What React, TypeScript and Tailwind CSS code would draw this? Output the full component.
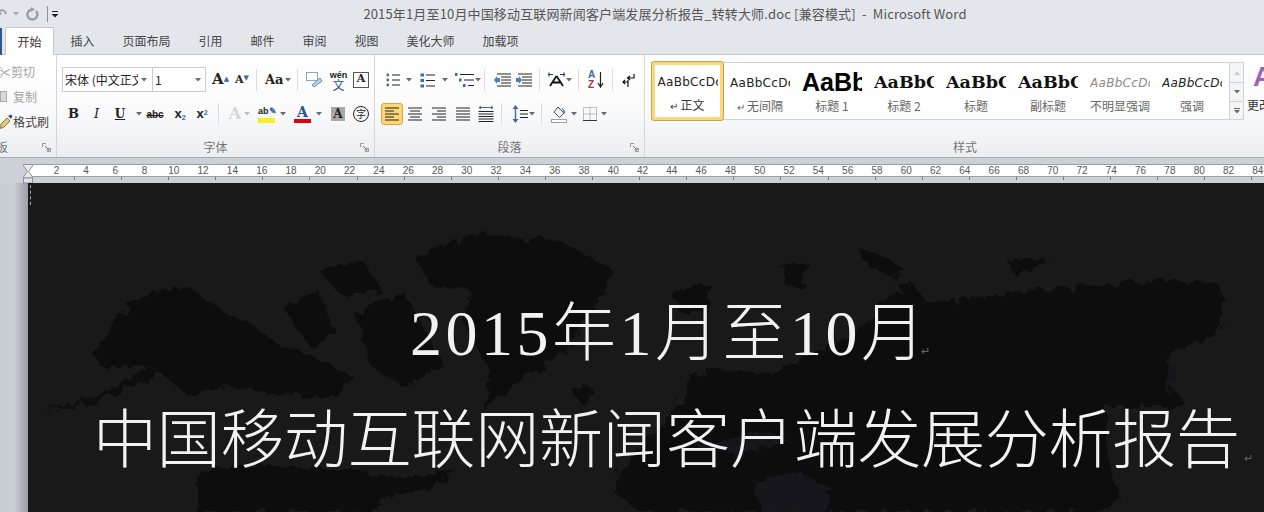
import React from "react";

const tabs = [
  { label: "插入", w: "w-[55px]" },
  { label: "页面布局", w: "w-[73px]" },
  { label: "引用", w: "w-[55px]" },
  { label: "邮件", w: "w-[49px]" },
  { label: "审阅", w: "w-[55px]" },
  { label: "视图", w: "w-[49px]" },
  { label: "美化大师", w: "w-[79px]" },
  { label: "加载项", w: "w-[61px]" },
];

const rulerNumbers = Array.from({ length: 42 }, (_, i) => (i + 1) * 2);
const rulerTicks = Array.from({ length: 26 }, (_, i) => i);

const Caret = ({ className = "" }: { className?: string }) => (
  <svg width="6" height="4" viewBox="0 0 6 4" className={`shrink-0 ${className}`}>
    <path d="M0 0h6L3 3.5z" fill="#6b6b6b" />
  </svg>
);

const Sep = ({ className = "" }: { className?: string }) => (
  <div className={`w-px h-[22px] bg-[#dcdee2] shrink-0 ${className}`} />
);

const Launcher = () => (
  <svg width="9" height="9" viewBox="0 0 9 9" className="shrink-0">
    <path d="M0.5 4V0.5H4M8.5 5v3.5H5" fill="none" stroke="#9a9a9a" />
    <path d="M3 3l4 4M7 4.5V7H4.5" fill="none" stroke="#777" />
  </svg>
);

const Lines = ({ rows, w = 16 }: { rows: [number, number][]; w?: number }) => (
  <svg width={w} height="14" viewBox={`0 0 ${w} 14`} className="shrink-0">
    {rows.map(([x, len], i) => (
      <rect key={i} x={x} y={1 + i * (12 / (rows.length - 1 || 1)) - 0.5} width={len} height="1" fill="#222" />
    ))}
  </svg>
);

const BulletList = () => (
  <svg width="14" height="14" viewBox="0 0 14 14" className="shrink-0">
    {[2, 7, 12].map((y) => (
      <g key={y}>
        <circle cx="1.8" cy={y} r="1.4" fill="#3d6aa5" />
        <rect x="6" y={y - 0.5} width="8" height="1" fill="#222" />
      </g>
    ))}
  </svg>
);

const NumberList = () => (
  <svg width="15" height="15" viewBox="0 0 15 15" className="shrink-0">
    {[2, 7.5, 13].map((y) => (
      <g key={y}>
        <rect x="0.5" y={y - 1.5} width="3.5" height="3" fill="#3d6aa5" />
        <rect x="6" y={y - 0.5} width="9" height="1" fill="#222" />
      </g>
    ))}
  </svg>
);

const MultiList = () => (
  <svg width="19" height="16" viewBox="0 0 19 16" className="shrink-0">
    <rect x="0" y="1" width="2.5" height="3" fill="#3d6aa5" />
    <rect x="5" y="2" width="14" height="1" fill="#222" />
    <rect x="4" y="6.5" width="2.5" height="3" fill="#3d6aa5" />
    <rect x="9" y="7.5" width="10" height="1" fill="#222" />
    <rect x="8" y="12" width="2.5" height="3" fill="#3d6aa5" />
    <rect x="13" y="13" width="6" height="1" fill="#222" />
  </svg>
);

const Indent = ({ flip = false }: { flip?: boolean }) => (
  <svg width="17" height="14" viewBox="0 0 17 14" className="shrink-0">
    {[1, 4, 7, 10, 13].map((y, i) => (
      <rect key={y} x={i === 0 || i === 4 ? 3 : 7} y={y - 0.5} width={i === 0 || i === 4 ? 14 : 10} height="1" fill="#222" />
    ))}
    <path d={flip ? "M1 5h3V3l3 4-3 4V9H1z" : "M6 5H3V3L0 7l3 4V9h3z"} fill="#4a7ebb" />
  </svg>
);

const AsianLayout = () => (
  <svg width="17" height="16" viewBox="0 0 17 16" className="shrink-0">
    <path d="M8.5 4L2 14M8.5 4L15 14M5 10.5h7" stroke="#111" strokeWidth="1.8" fill="none" />
    <path d="M0 2.5h5M12 2.5h5" stroke="#1f3f77" strokeWidth="1.2" />
    <path d="M1 0.5v4M16 0.5v4" stroke="#1f3f77" strokeWidth="1.2" />
  </svg>
);

const Sort = () => (
  <div className="relative w-[17px] h-[20px] shrink-0 font-['Liberation_Sans',sans-serif] font-bold text-[10px] leading-[10px]">
    <div className="text-[#3d6aa5] pl-px">A</div>
    <div className="text-[#9c3c3c] pl-px">Z</div>
    <svg width="7" height="17" viewBox="0 0 7 17" className="absolute right-0 top-[2px]">
      <path d="M3.5 0v15M1 11l2.5 4L6 11" stroke="#222" strokeWidth="1.2" fill="none" />
    </svg>
  </div>
);

const ParaMark = () => (
  <svg width="13" height="15" viewBox="0 0 13 15" className="shrink-0">
    <path d="M12 1v4H6M8 3L5.5 5 8 7" stroke="#111" strokeWidth="1.2" fill="none" />
    <path d="M6 9H1M3 7l-2 2 2 2M6 7v7" stroke="#111" strokeWidth="1.2" fill="none" />
  </svg>
);

const Distributed = () => (
  <svg width="16" height="18" viewBox="0 0 16 18" className="shrink-0">
    <path d="M1 2.5h14M3 1L1 2.5 3 4M13 1l2 1.5L13 4" stroke="#3d6aa5" fill="none" />
    {[6, 8.5, 11, 13.5, 16].map((y) => (
      <rect key={y} x="0.5" y={y} width="15" height="1" fill="#222" />
    ))}
  </svg>
);

const LineSpacing = () => (
  <svg width="16" height="18" viewBox="0 0 16 18" className="shrink-0">
    <path d="M3.5 3v12" stroke="#3d6aa5" strokeWidth="1.4" />
    <path d="M3.5 0L0.5 4h6zM3.5 18l-3-4h6z" fill="#3d6aa5" />
    {[5, 8.5, 12].map((y) => (
      <rect key={y} x="8" y={y} width="8" height="1" fill="#222" />
    ))}
  </svg>
);

const Shade = () => (
  <svg width="16" height="17" viewBox="0 0 16 17" className="shrink-0">
    <path d="M7 1l6 6-4.5 4.5L3 6z" fill="#eef2f6" stroke="#555" />
    <path d="M7 1L9 3.5" stroke="#555" />
    <path d="M11 2l3 4-1 1.5" fill="#3d7ec8" stroke="#3d7ec8" />
    <rect x="0.5" y="13.5" width="15" height="3" fill="#fff" stroke="#a0a0a0" />
  </svg>
);

const Borders = () => (
  <svg width="14" height="14" viewBox="0 0 14 14" className="shrink-0">
    <path d="M0.5 0.5h13v13h-13zM7 0.5v13M0.5 7h13" fill="none" stroke="#888" strokeDasharray="1 1" />
    <path d="M0 13.5h14" stroke="#333" />
  </svg>
);

const Brush = () => (
  <svg width="13" height="15" viewBox="0 0 13 15" className="shrink-0">
    <path d="M1 10l6-6 3 3-6 6-3.5 1.5z" fill="#e6c86e" stroke="#8a7a4a" />
    <path d="M8 2l3-1.5 1.5 1.5L11 5z" fill="#2d4f8a" />
  </svg>
);

const Hourglass = () => (
  <svg width="11" height="20" viewBox="0 0 11 20" className="absolute left-[23px] top-[6px]">
    <path d="M0.5 0.5h9v1.5L5.5 7.5l4 5.5v1h-9v-1l4-5.5-4-5.5z" fill="#e9ebee" stroke="#8d9299" />
    <rect x="0.5" y="14" width="9" height="5" fill="#e1e3e7" stroke="#8d9299" />
  </svg>
);

const styles = [
  { sample: "AaBbCcDc", label: "正文", mark: true, cls: "font-['DejaVu_Sans',sans-serif] text-[12px] tracking-[0.3px] text-[#222]", selected: true },
  { sample: "AaBbCcDc", label: "无间隔", mark: true, cls: "font-['DejaVu_Sans',sans-serif] text-[12px] tracking-[0.3px] text-[#222]", selected: false },
  { sample: "AaBbCc", label: "标题 1", mark: false, cls: "font-['Liberation_Sans',sans-serif] font-bold text-[25px] text-black", selected: false },
  { sample: "AaBbCc", label: "标题 2", mark: false, cls: "font-['DejaVu_Serif',serif] font-bold text-[17.5px] text-[#111]", selected: false },
  { sample: "AaBbCc", label: "标题", mark: false, cls: "font-['DejaVu_Serif',serif] font-bold text-[17.5px] text-[#111]", selected: false },
  { sample: "AaBbCc", label: "副标题", mark: false, cls: "font-['DejaVu_Serif',serif] font-bold text-[17.5px] text-[#111]", selected: false },
  { sample: "AaBbCcDc", label: "不明显强调", mark: false, cls: "font-['DejaVu_Sans',sans-serif] italic text-[12px] tracking-[0.3px] text-[#8a8a8a]", selected: false },
  { sample: "AaBbCcDc", label: "强调", mark: false, cls: "font-['DejaVu_Sans',sans-serif] italic text-[12px] tracking-[0.3px] text-[#222]", selected: false },
];

// faint continents behind the title, the filter roughens the coast lines
const WorldMap = () => (
  <svg viewBox="28 183 1236 329" className="absolute inset-0 w-full h-full">
    <defs>
      <filter id="coast" x="-5%" y="-5%" width="110%" height="110%">
        <feTurbulence type="fractalNoise" baseFrequency="0.09" numOctaves="3" seed="4" />
        <feDisplacementMap in="SourceGraphic" scale="14" />
      </filter>
    </defs>
    <g fill="#0f0f10" filter="url(#coast)">
      <path d="M137 297L185 285L226 313L250 323L282 347L306 353L355 377L343 387L330 400L300 395L226 387L190 397L153 367L101 367L93 353L117 320Z" />
      <path d="M40 413L100 395L150 367L160 372L100 400Z" />
      <path d="M282 307L318 290L335 333L310 347Z" />
      <path d="M318 270L363 260L383 293L339 293Z" />
      <path d="M355 313L403 290L444 367L403 387L371 367Z" />
      <path d="M415 257L476 233L565 243L613 270L600 295L565 353L504 393L484 413L490 370L462 320L470 290L430 285Z" />
      <path d="M573 390L590 385L597 397L580 403Z" />
      <path d="M197 470L260 465L340 470L400 478L456 470L430 490L390 495L370 512L197 512Z" />
      <path d="M955 300L1035 290L1075 287L1156 280L1217 283L1225 300L1217 337L1184 347L1168 353L1172 387L1188 407L1108 407L1104 447L1120 497L1100 512L640 512L612 490L632 457L672 413L690 380L713 367L760 375L800 360L860 330L885 300L910 280L925 300L942 303Z" />
      <path d="M858 247L880 255L906 270L895 280L868 265Z" />
      <path d="M1007 260L1047 258L1030 272L1015 275Z" />
      <path d="M672 290L712 285L705 312L680 312Z" />
      <path d="M780 265L810 262L800 290L785 285Z" />
    </g>
    <g fill="#19191a" filter="url(#coast)">
      <path d="M753 480L800 472L833 490L825 512L760 512Z" />
      <path d="M690 445L760 430L790 440L740 455Z" />
      <path d="M1170 360L1180 385L1165 392Z" />
    </g>
  </svg>
);

export default function App() {
  return (
    <div className="w-[1264px] h-[512px] overflow-hidden flex flex-col bg-[#ccd0d7] font-['Noto_Sans_CJK_SC',sans-serif]">
      {/* title bar */}
      <div className="h-[27px] shrink-0 relative flex items-center justify-center bg-[#e3e7ec] pl-[66px]">
        <span className="text-[13px] tracking-[0.15px] text-[#555] whitespace-pre">2015年1月至10月中国移动互联网新闻客户端发展分析报告_转转大师.doc [兼容模式]  -  Microsoft Word</span>
        <div className="absolute left-0 top-0 h-full flex items-center">
          <span className="text-[14px] text-[#9a9da3] -ml-[5px] w-[18px] font-bold">↶</span>
          <Caret className="opacity-50" />
          <svg width="14" height="14" viewBox="0 0 14 14" className="ml-[6px]">
            <path d="M11 4a5 5 0 1 1-4-1.5" stroke="#9a9da3" strokeWidth="2.4" fill="none" />
            <path d="M6 0v5l4-2.5z" fill="#9a9da3" />
          </svg>
          <div className="w-px h-[16px] bg-[#8f9399] ml-[8px]" />
          <svg width="8" height="8" viewBox="0 0 8 8" className="ml-[3px]">
            <path d="M1 1.5h6" stroke="#222" />
            <path d="M0.5 4h7L4 7.5z" fill="#222" />
          </svg>
        </div>
      </div>

      {/* tabs */}
      <div className="h-[28px] shrink-0 flex items-end bg-[#e3e7ec] border-b border-[#c4c7cc]">
        <div className="w-[2px] h-[27px] bg-[#2b579a] -mb-px" />
        <div className="w-[49px] h-[28px] ml-[3px] -mb-px bg-white border border-b-0 border-[#c4c7cc] rounded-t-[2px] flex items-center justify-center text-[12px] text-[#333]">开始</div>
        <div className="flex h-full ml-[1px]">
          {tabs.map((t) => (
            <div key={t.label} className={`${t.w} flex items-center justify-center text-[12px] text-[#444]`}>{t.label}</div>
          ))}
        </div>
      </div>

      {/* ribbon */}
      <div className="h-[103px] shrink-0 flex bg-gradient-to-b from-white via-[#fbfbfc] to-[#eceef1] border-b border-[#a9acb1]">
        {/* clipboard */}
        <div className="w-[57px] shrink-0 border-r border-[#d4d6da] flex flex-col text-[12px] overflow-hidden">
          <div className="h-[25px] mt-[4px] flex items-center text-[#a3a3a3]">
            <span className="w-[13px] text-[13px] -ml-[2px] pr-[2px]">✂</span><span>剪切</span>
          </div>
          <div className="h-[25px] flex items-center text-[#a3a3a3]">
            <div className="w-[7px] h-[11px] bg-[#d8d8d8] border border-[#aaa] mr-[6px]" /><span>复制</span>
          </div>
          <div className="h-[25px] flex items-center text-[#444]">
            <Brush /><span>格式刷</span>
          </div>
          <div className="mt-auto h-[20px] flex items-center justify-between pr-[5px] text-[#777]">
            <span className="-ml-[4px]">板</span>
            <Launcher />
          </div>
        </div>

        {/* font */}
        <div className="w-[318px] shrink-0 border-r border-[#d4d6da] flex flex-col">
          <div className="h-[25px] mt-[12px] pl-[5px] flex items-center">
            <div className="w-[91px] h-[25px] border border-[#c9ccd1] bg-white flex items-center pl-[2px] pr-[5px] text-[12px] text-[#222] overflow-hidden whitespace-nowrap">
              <span className="w-[73px] overflow-hidden">宋体 (中文正文</span><Caret className="ml-auto" />
            </div>
            <div className="w-[53px] h-[25px] border border-l-0 border-[#c9ccd1] bg-white flex items-center pl-[2px] pr-[4px] text-[12px] text-[#222]">
              <span>1</span><Caret className="ml-auto" />
            </div>
            <span className="ml-[6px] w-[22px] font-['DejaVu_Serif',serif] font-bold text-[15px] leading-none text-[#222]">A<sup className="text-[7px] text-[#3d6aa5]">▲</sup></span>
            <span className="ml-[1px] w-[19px] font-['DejaVu_Serif',serif] font-bold text-[11px] leading-none text-[#222]">A<sup className="text-[7px] text-[#3d6aa5]">▼</sup></span>
            <Sep className="ml-[2px]" />
            <span className="ml-[8px] font-['DejaVu_Serif',serif] font-bold text-[13px] text-[#222] w-[20px] whitespace-nowrap">Aa</span>
            <Caret />
            <Sep className="ml-[6px]" />
            <svg width="17" height="17" viewBox="0 0 17 17" className="ml-[8px]">
              <rect x="0.5" y="1.5" width="11" height="8" fill="#fff" stroke="#8aa4c8" />
              <path d="M6 14l8-7 2 3-8 6z" fill="#bcd3ee" stroke="#6b8ab0" />
            </svg>
            <div className="ml-[7px] w-[17px] h-[18px] flex flex-col items-center leading-[8px]">
              <span className="text-[9px] font-bold text-[#222] font-['Liberation_Sans',sans-serif]">wén</span>
              <span className="text-[12px] text-[#2d4f8a] leading-[11px]">文</span>
            </div>
            <div className="ml-[6px] w-[16px] h-[16px] border border-[#555] flex items-center justify-center font-['DejaVu_Serif',serif] font-bold text-[11px] text-[#222]">A</div>
          </div>
          <div className="h-[20px] mt-[12px] pl-[5px] flex items-center font-['DejaVu_Serif',serif] text-[#222]">
            <span className="w-[23px] text-center font-bold text-[13px]">B</span>
            <span className="w-[23px] text-center italic text-[13px]">I</span>
            <span className="w-[24px] text-center underline font-bold text-[12px]">U</span>
            <Caret className="ml-[4px]" />
            <span className="ml-[2px] w-[22px] text-center line-through font-bold text-[10px] font-['Liberation_Sans',sans-serif]">abc</span>
            <span className="ml-[3px] w-[22px] text-center font-bold text-[13px] font-['Liberation_Sans',sans-serif]">x<sub className="text-[7px] text-[#3d6aa5]">2</sub></span>
            <span className="w-[22px] text-center font-bold text-[13px] font-['Liberation_Sans',sans-serif]">x<sup className="text-[7px] text-[#3d6aa5]">2</sup></span>
            <Sep className="ml-[5px]" />
            <span className="ml-[9px] w-[14px] text-center font-bold text-[16px] text-[#d6d6d6]">A</span>
            <Caret className="ml-[2px] opacity-40" />
            <div className="ml-[8px] w-[17px] h-[17px] flex flex-col items-center">
              <span className="w-full h-[12px] leading-[11px] text-[9px] font-bold font-['Liberation_Sans',sans-serif] text-[#222]">ab<span className="text-[#3d6aa5]">✎</span></span>
              <span className="w-full h-[5px] bg-[#f4f21c]" />
            </div>
            <Caret className="ml-[5px]" />
            <div className="ml-[8px] w-[17px] h-[17px] flex flex-col items-center">
              <span className="h-[12px] leading-[12px] font-bold text-[14px] text-[#2d4f8a]">A</span>
              <span className="w-full h-[4px] bg-[#e0000f] mt-px" />
            </div>
            <Caret className="ml-[5px]" />
            <div className="ml-[9px] w-[14px] h-[14px] bg-[#a9a9a9] flex items-center justify-center font-bold text-[12px] text-[#222]">A</div>
            <div className="ml-[8px] w-[16px] h-[16px] rounded-full border border-[#222] flex items-center justify-center text-[10px] leading-none text-[#222] font-['Noto_Sans_CJK_SC',sans-serif]">字</div>
          </div>
          <div className="mt-auto h-[20px] relative flex items-center justify-center text-[12px] text-[#777]">
            字体
            <div className="absolute right-[5px] top-[6px]"><Launcher /></div>
          </div>
        </div>

        {/* paragraph */}
        <div className="w-[270px] shrink-0 border-r border-[#d4d6da] flex flex-col">
          <div className="h-[24px] mt-[13px] pl-[11px] flex items-center">
            <BulletList /><Caret className="ml-[6px]" />
            <div className="ml-[8px]"><NumberList /></div><Caret className="ml-[7px]" />
            <div className="ml-[7px]"><MultiList /></div><Caret className="ml-[1px]" />
            <Sep className="ml-[3px]" />
            <div className="ml-[9px]"><Indent /></div>
            <div className="ml-[4px]"><Indent flip /></div>
            <Sep className="ml-[7px]" />
            <div className="ml-[8px]"><AsianLayout /></div><Caret className="ml-[1px]" />
            <Sep className="ml-[6px]" />
            <div className="ml-[8px]"><Sort /></div>
            <Sep className="ml-[8px]" />
            <div className="ml-[9px]"><ParaMark /></div>
          </div>
          <div className="h-[22px] mt-[11px] pl-[6px] flex items-center">
            <div className="w-[22px] h-[22px] rounded-[3px] bg-[#fdd776] border border-[#d9a441] flex items-center justify-center">
              <Lines w={14} rows={[[0, 14], [0, 9], [0, 14], [0, 9], [0, 14]]} />
            </div>
            <div className="ml-[5px]"><Lines w={14} rows={[[0, 14], [2, 10], [0, 14], [2, 10], [0, 14]]} /></div>
            <div className="ml-[10px]"><Lines w={14} rows={[[0, 14], [5, 9], [0, 14], [5, 9], [0, 14]]} /></div>
            <div className="ml-[10px]"><Lines w={14} rows={[[0, 14], [0, 14], [0, 14], [0, 14], [0, 14]]} /></div>
            <div className="ml-[8px]"><Distributed /></div>
            <Sep className="ml-[7px]" />
            <div className="ml-[10px]"><LineSpacing /></div><Caret className="ml-[1px]" />
            <Sep className="ml-[6px]" />
            <div className="ml-[9px]"><Shade /></div><Caret className="ml-[4px]" />
            <div className="ml-[6px]"><Borders /></div><Caret className="ml-[4px]" />
          </div>
          <div className="mt-auto h-[20px] relative flex items-center justify-center text-[12px] text-[#777]">
            段落
            <div className="absolute right-[5px] top-[6px]"><Launcher /></div>
          </div>
        </div>

        {/* styles */}
        <div className="flex-1 min-w-0 flex flex-col overflow-hidden">
          <div className="h-[58px] mt-[7px] pl-[6px] flex items-stretch">
            <div className="w-[579px] shrink-0 flex bg-white border border-[#cfd2d6]">
              {styles.map((s, i) => (
                <div
                  key={i}
                  className={`shrink-0 flex flex-col items-center overflow-hidden ${s.selected ? "w-[71px] mr-px border-[3px] border-[#fbd878] outline outline-1 outline-[#c9a44f] rounded-[2px] -my-px pt-[2px]" : "w-[72px] pt-[5px]"}`}
                >
                  <div className={`w-[60px] h-[29px] overflow-hidden whitespace-nowrap flex items-center justify-start ${s.cls}`}>{s.sample}</div>
                  <div className={`text-[12px] leading-[17px] whitespace-nowrap ${s.selected ? "text-[#333]" : "text-[#666]"}`}>
                    {s.mark && <span className="text-[10px] mr-[2px]">↵</span>}{s.label}
                  </div>
                </div>
              ))}
            </div>
            <div className="w-[14px] shrink-0 flex flex-col border border-l-0 border-[#cfd2d6] bg-[#f4f5f7]">
              <div className="h-[20px] flex items-center justify-center border-b border-[#cfd2d6]"><Caret className="rotate-180 opacity-30" /></div>
              <div className="h-[19px] flex items-center justify-center border-b border-[#cfd2d6]"><Caret /></div>
              <div className="flex-1 flex flex-col items-center justify-center"><div className="w-[6px] h-px bg-[#666] mb-px" /><Caret /></div>
            </div>
            <div className="ml-[3px] flex flex-col text-[12px] text-[#333] whitespace-nowrap">
              <span className="h-[30px] ml-[6px] font-['Liberation_Sans',sans-serif] font-bold text-[28px] leading-[30px] text-[#a35fb8]">A</span>
              <span className="mt-[4px] leading-[17px]">更改</span>
            </div>
          </div>
          <div className="mt-auto h-[20px] w-[640px] flex items-center justify-center text-[12px] text-[#777]">样式</div>
        </div>
      </div>

      {/* ruler */}
      <div className="h-[25px] shrink-0 relative pt-[6px] bg-[#ccd0d7]">
        <div className="ml-[28px] h-[13px] bg-white border-y border-[#9a9da3] flex pl-[14px] items-center overflow-hidden">
          {rulerNumbers.map((n) => (
            <span key={n} className="w-[29.3px] shrink-0 text-center text-[10px] leading-none text-[#555] font-['Liberation_Sans',sans-serif]">{n}</span>
          ))}
        </div>
        <div className="ml-[74px] flex">
          {rulerTicks.map((t) => (
            <div key={t} className="w-[47.1px] shrink-0"><div className="w-px h-[3px] bg-[#777]" /></div>
          ))}
        </div>
        <Hourglass />
      </div>

      {/* document */}
      <div className="flex-1 min-h-0 flex">
        <div className="w-[28px] shrink-0 bg-gradient-to-r from-[#c9cdd4] via-[#c9cdd4] to-[#9a9ea6]" />
        <div className="flex-1 relative bg-[#19191a] overflow-hidden">
          <WorldMap />
          <div className="absolute left-[2px] top-[2px] h-[20px] border-l border-dashed border-[#aaa]" />
          <div className="relative pt-[119px] text-[#f2f2f2] whitespace-nowrap font-['Liberation_Serif','Noto_Sans_CJK_SC',serif] font-light text-[64px] leading-[64px]">
            <div className="ml-[382px] tracking-[3.5px]">2015年1月至10月<span className="text-[11px] -ml-[8px] text-[#666]">↵</span></div>
            <div className="ml-[65px] mt-[26px] tracking-[-0.3px]">中国移动互联网新闻客户端发展分析报告<span className="text-[11px] ml-[4px] text-[#666]">↵</span></div>
          </div>
        </div>
      </div>
    </div>
  );
}
